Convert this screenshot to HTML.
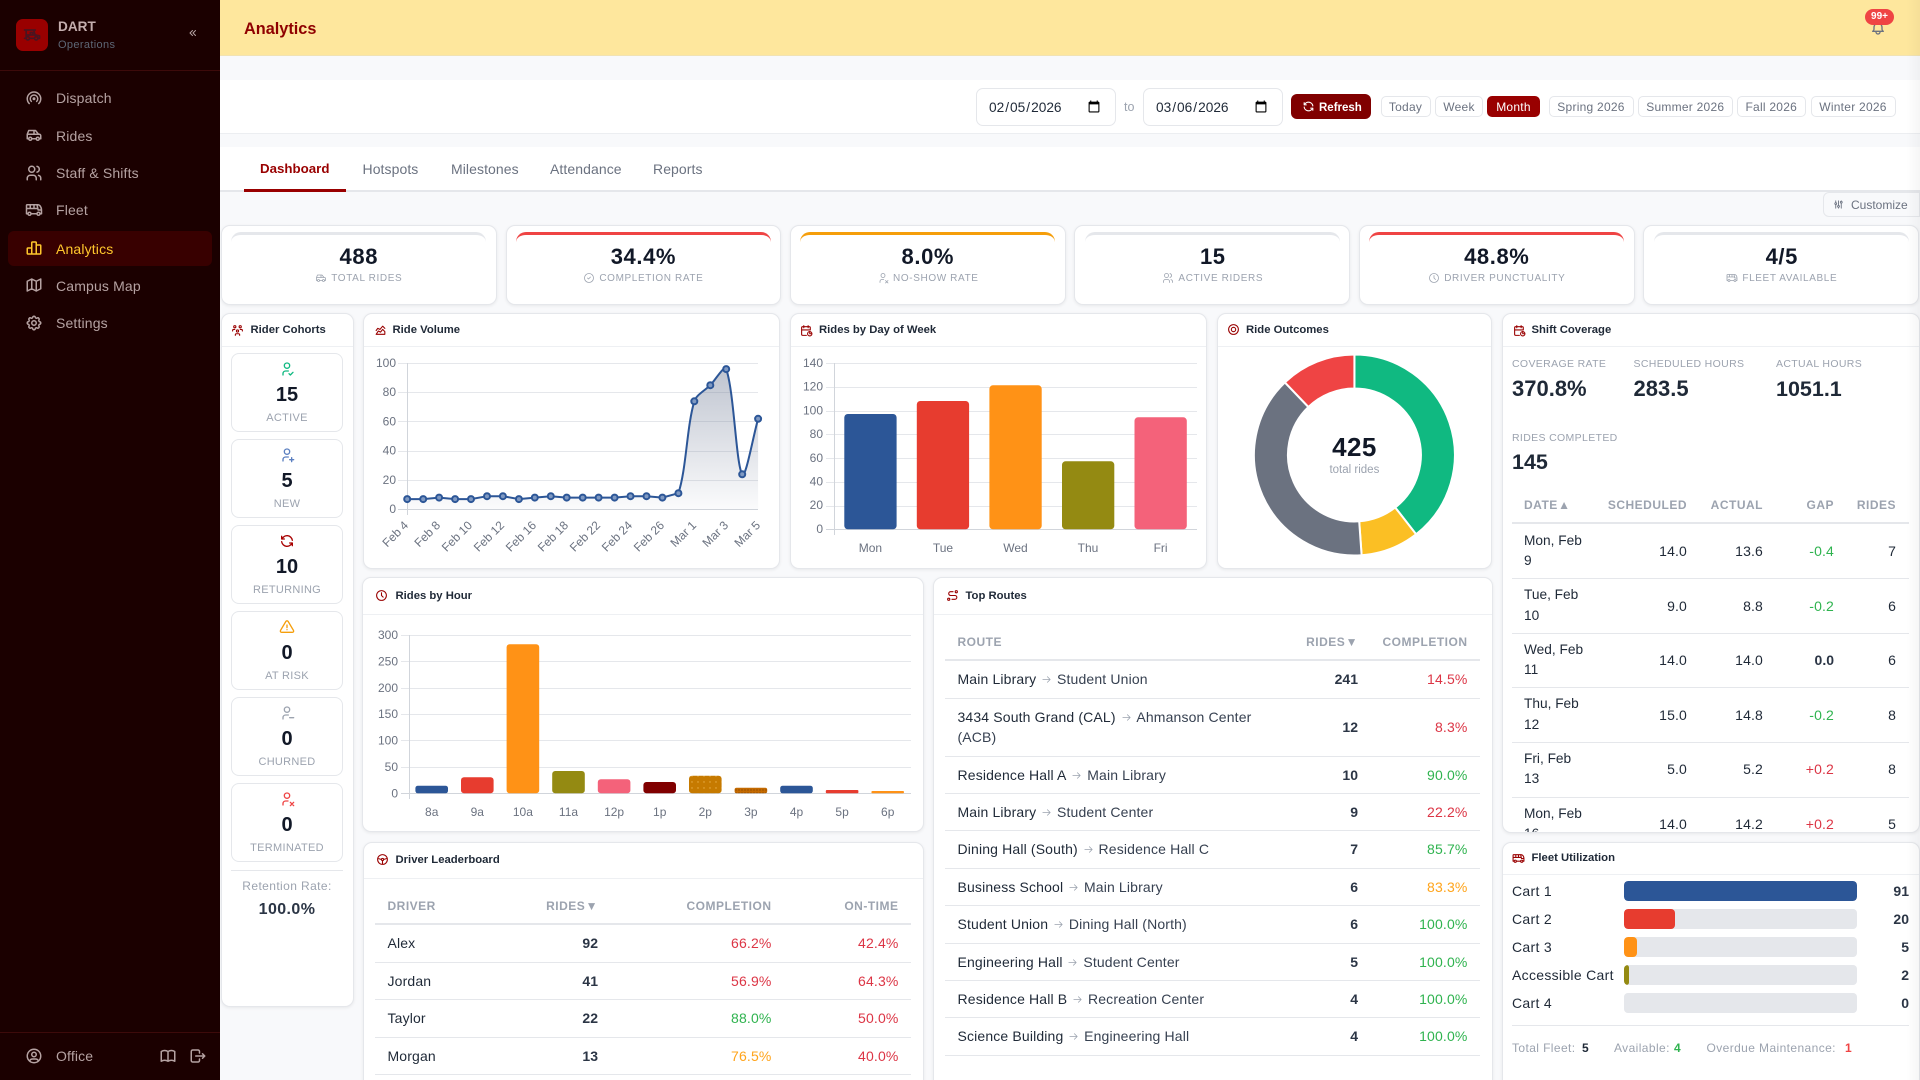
<!DOCTYPE html>
<html lang="en-US">
<head>
<meta charset="utf-8">
<title>DART Operations - Analytics</title>
<style>
*{box-sizing:border-box}
html,body{margin:0;padding:0;width:1920px;height:1080px;overflow:hidden;background:#f8f9fb}
body{position:relative;font-family:"Liberation Sans",sans-serif;color:#1f2937}
.t{position:absolute;white-space:nowrap;line-height:20px;height:20px}
.c{transform:translateX(-50%)}
.b{position:absolute}
svg.i{position:absolute;fill:none;stroke:currentColor;stroke-width:2;stroke-linecap:round;stroke-linejoin:round}
.card{position:absolute;background:#fff;border:1px solid #e5e7eb;border-radius:9px;box-shadow:0 1px 3px rgba(0,0,0,.07)}
.hl{position:absolute;height:1px;background:#eef0f3}
.nav{font-size:14px;letter-spacing:.15px;color:#b5a2a2;left:56px}
.navi{color:#b5a2a2;left:25px;width:18px;height:18px}
.ti{font-size:11.3px;font-weight:700;color:#1f2937;letter-spacing:0}
.hi{color:#990000;width:13px;height:13px}
.tab{font-size:14px;letter-spacing:.08px;color:#6b7280;top:158.5px}
.pre{position:absolute;top:96px;height:21px;border:1px solid #e5e7eb;border-radius:5px;background:#fff;font-size:12px;letter-spacing:.25px;color:#6b7280;line-height:21px;text-align:center;white-space:nowrap}
input{position:absolute;top:88px;height:38px;border:1px solid #e5e7eb;border-radius:7px;background:#fff;font:13.7px "Liberation Sans",sans-serif;color:#1f2937;padding:0 12px 0 11px}
.kv{font-size:22px;font-weight:700;letter-spacing:.6px;color:#111827;text-align:center;top:247px;width:275.6px}
.kl{position:absolute;top:268px;height:20px;width:275.6px;display:flex;justify-content:center;align-items:center;gap:4px;font-size:10px;letter-spacing:.62px;color:#9ca3af;white-space:nowrap}
.kl svg{position:static;width:12px;height:12px;color:#9ca3af;stroke-width:1.6}
.kb{position:absolute;top:232px;height:10px;width:255px;border-top:3px solid #e5e7eb;border-radius:12px 12px 0 0}
.tile{position:absolute;left:231px;width:112px;height:79px;background:#fff;border:1px solid #e5e7eb;border-radius:8px}
.cv{font-size:20px;font-weight:700;color:#111827;left:287px}
.cl{font-size:11px;letter-spacing:.3px;color:#9ca3af;left:287px}
.tile-i{left:279px;width:16px;height:16px;stroke-width:1.8}
.th{font-size:12px;font-weight:700;letter-spacing:.5px;color:#9ca3af}
.th span{margin-left:-3.5px}
.td{font-size:14px;letter-spacing:.15px;color:#1f2937}
.d{font-size:13.7px;letter-spacing:0}
.n{font-weight:700;letter-spacing:0;color:#2b3545}
.to{color:#374151}
.ar{width:11px;height:11px;margin:0 4.85px;vertical-align:-1px;fill:none;stroke:#9ca3af;stroke-width:1.8;stroke-linecap:round;stroke-linejoin:round}
.red{color:#dc3545}.grn{color:#2fb34f}.amb{color:#ffa41b}
.sl{font-size:10.5px;letter-spacing:.35px;color:#9ca3af}
.sv{font-size:21.5px;font-weight:700;color:#1f2937}
.rule{position:absolute;height:1px;background:#e5e7eb}
.rule2{position:absolute;height:2px;background:#e5e7eb}
.fl{font-size:14px;letter-spacing:.3px;color:#1f2937;left:1512px}
.fv{font-size:14px;font-weight:700;color:#2b3545;right:11px}
.tr{position:absolute;left:1624px;width:233px;height:20px;border-radius:4px;background:#e5e7eb;overflow:hidden}
.tr div{height:20px;border-radius:4px}
.ff{font-size:12px;letter-spacing:.4px;color:#9ca3af;top:1037.5px}
.ffb{font-size:12px;font-weight:700;top:1037.5px}
svg text{font-family:"Liberation Sans",sans-serif;font-size:12px;fill:#6b7280}
</style>
</head>
<body>
<svg width="0" height="0" style="position:absolute">
<symbol id="users" viewBox="0 0 24 24"><path d="M9 7m-4 0a4 4 0 1 0 8 0a4 4 0 1 0 -8 0M3 21v-2a4 4 0 0 1 4 -4h4a4 4 0 0 1 4 4v2M16 3.13a4 4 0 0 1 0 7.75M21 21v-2a4 4 0 0 0 -3 -3.85"/></symbol>
<symbol id="bus" viewBox="0 0 24 24"><path d="M6 17m-2 0a2 2 0 1 0 4 0a2 2 0 1 0 -4 0M18 17m-2 0a2 2 0 1 0 4 0a2 2 0 1 0 -4 0M4 17h-2v-11a1 1 0 0 1 1 -1h14a5 7 0 0 1 5 7v5h-2m-4 0h-8M16 5l1.5 7l4.5 0M2 10l15 0M7 5l0 5M12 5l0 5"/></symbol>
<symbol id="car" viewBox="0 0 24 24"><path d="M7 17m-2 0a2 2 0 1 0 4 0a2 2 0 1 0 -4 0M17 17m-2 0a2 2 0 1 0 4 0a2 2 0 1 0 -4 0M5 17h-2v-6l2 -5h9l4 5h1a2 2 0 0 1 2 2v4h-2m-4 0h-6m-6 -6h15m-6 0v-5"/></symbol>
<symbol id="clock" viewBox="0 0 24 24"><path d="M3 12a9 9 0 1 0 18 0a9 9 0 0 0 -18 0M12 7v5l3 3"/></symbol>
<symbol id="cal" viewBox="0 0 24 24"><path d="M11.795 21h-6.795a2 2 0 0 1 -2 -2v-12a2 2 0 0 1 2 -2h12a2 2 0 0 1 2 2v4M18 14v4h4M18 18m-4 0a4 4 0 1 0 8 0a4 4 0 1 0 -8 0M15 3v4M7 3v4M3 11h16"/></symbol>
<symbol id="refresh" viewBox="0 0 24 24"><path d="M20 11a8.1 8.1 0 0 0 -15.5 -2m-.5 -4v4h4M4 13a8.1 8.1 0 0 0 15.5 2m.5 4v-4h-4"/></symbol>
<symbol id="userx" viewBox="0 0 24 24"><path d="M8 7a4 4 0 1 0 8 0a4 4 0 0 0 -8 0M6 21v-2a4 4 0 0 1 4 -4h3.5M22 22l-5 -5M17 22l5 -5"/></symbol>
<symbol id="arrow" viewBox="0 0 24 24"><path d="M4 12h16M14 18l6 -6M14 6l6 6"/></symbol>
</svg>

<!-- SIDEBAR -->
<div class="b" style="left:0;top:0;width:220px;height:1080px;background:#1b0000"></div>
<div class="b" style="left:16px;top:19px;width:32px;height:32px;border-radius:7px;background:#990000"></div>
<svg class="i" style="left:22px;top:25px;width:20px;height:20px;color:#4a1420" viewBox="0 0 24 24"><path d="M3 6h13M5 6v10M14 6l2 7M3 16h2m4 0h6m4 0h2v-3l-5 -1H6M7 16m-2 0a2 2 0 1 0 4 0a2 2 0 1 0 -4 0M17 16m-2 0a2 2 0 1 0 4 0a2 2 0 1 0 -4 0M10 9h3v3h-3z"/></svg>
<div class="t" style="left:58px;top:17px;font-size:13.6px;font-weight:700;color:#c4aeae">DART</div>
<div class="t" style="left:58px;top:35px;font-size:11px;letter-spacing:.35px;color:#5d6675">Operations</div>
<svg class="i" style="left:187px;top:27px;width:12px;height:12px;color:#b5a2a2" viewBox="0 0 24 24"><path d="M11 7l-5 5l5 5M17 7l-5 5l5 5"/></svg>
<div class="b" style="left:0;top:70px;width:220px;height:1px;background:#3d0a0a"></div>
<div class="b" style="left:8px;top:231px;width:204px;height:35px;border-radius:6px;background:#380000"></div>

<svg class="i navi" style="top:89px" viewBox="0 0 24 24"><path d="M18.364 19.364a9 9 0 1 0 -12.728 0M15.536 16.536a5 5 0 1 0 -7.072 0M12 13m-1 0a1 1 0 1 0 2 0a1 1 0 1 0 -2 0"/></svg>
<div class="t nav" style="top:88px">Dispatch</div>
<svg class="i navi" style="top:126px"><use href="#car"/></svg>
<div class="t nav" style="top:125.5px">Rides</div>
<svg class="i navi" style="top:164px"><use href="#users"/></svg>
<div class="t nav" style="top:163px">Staff &amp; Shifts</div>
<svg class="i navi" style="top:201px"><use href="#bus"/></svg>
<div class="t nav" style="top:200px">Fleet</div>
<svg class="i navi" style="top:239px;color:#ffc72c" viewBox="0 0 24 24"><path d="M3 13a1 1 0 0 1 1 -1h4a1 1 0 0 1 1 1v6a1 1 0 0 1 -1 1h-4a1 1 0 0 1 -1 -1zM15 9a1 1 0 0 1 1 -1h4a1 1 0 0 1 1 1v10a1 1 0 0 1 -1 1h-4a1 1 0 0 1 -1 -1zM9 5a1 1 0 0 1 1 -1h4a1 1 0 0 1 1 1v14a1 1 0 0 1 -1 1h-4a1 1 0 0 1 -1 -1zM4 20h14"/></svg>
<div class="t nav" style="top:238.5px;color:#ffc72c">Analytics</div>
<svg class="i navi" style="top:276px" viewBox="0 0 24 24"><path d="M3 7l6 -3l6 3l6 -3v13l-6 3l-6 -3l-6 3v-13M9 4v13M15 7v13"/></svg>
<div class="t nav" style="top:275.5px">Campus Map</div>
<svg class="i navi" style="top:314px" viewBox="0 0 24 24"><path d="M10.325 4.317c.426 -1.756 2.924 -1.756 3.35 0a1.724 1.724 0 0 0 2.573 1.066c1.543 -.94 3.31 .826 2.37 2.37a1.724 1.724 0 0 0 1.065 2.572c1.756 .426 1.756 2.924 0 3.35a1.724 1.724 0 0 0 -1.066 2.573c.94 1.543 -.826 3.31 -2.37 2.37a1.724 1.724 0 0 0 -2.572 1.065c-.426 1.756 -2.924 1.756 -3.35 0a1.724 1.724 0 0 0 -2.573 -1.066c-1.543 .94 -3.31 -.826 -2.37 -2.37a1.724 1.724 0 0 0 -1.065 -2.572c-1.756 -.426 -1.756 -2.924 0 -3.35a1.724 1.724 0 0 0 1.066 -2.573c-.94 -1.543 .826 -3.31 2.37 -2.37c1 .608 2.296 .07 2.572 -1.065zM9 12a3 3 0 1 0 6 0a3 3 0 0 0 -6 0"/></svg>
<div class="t nav" style="top:313px">Settings</div>

<div class="b" style="left:0;top:1032px;width:220px;height:1px;background:#3d0a0a"></div>
<svg class="i navi" style="top:1047px" viewBox="0 0 24 24"><path d="M12 12m-9 0a9 9 0 1 0 18 0a9 9 0 1 0 -18 0M12 10m-3 0a3 3 0 1 0 6 0a3 3 0 1 0 -6 0M6.168 18.849a4 4 0 0 1 3.832 -2.849h4a4 4 0 0 1 3.834 2.855"/></svg>
<div class="t nav" style="top:1046px">Office</div>
<svg class="i navi" style="left:159px;top:1047px" viewBox="0 0 24 24"><path d="M3 19a9 9 0 0 1 9 0a9 9 0 0 1 9 0M3 6a9 9 0 0 1 9 0a9 9 0 0 1 9 0M3 6l0 13M12 6l0 13M21 6l0 13"/></svg>
<svg class="i navi" style="left:189px;top:1047px" viewBox="0 0 24 24"><path d="M14 8v-2a2 2 0 0 0 -2 -2h-7a2 2 0 0 0 -2 2v12a2 2 0 0 0 2 2h7a2 2 0 0 0 2 -2v-2M9 12h12l-3 -3M18 15l3 -3"/></svg>

<!-- HEADER -->
<div class="b" style="left:220px;top:0;width:1700px;height:56px;background:#fee79d;border-bottom:1px solid #f1e3b4"></div>
<div class="t" style="left:244px;top:19px;font-size:16.3px;font-weight:700;color:#8f0000">Analytics</div>
<svg class="i" style="left:1870px;top:20px;width:16px;height:16px;color:#6b7280" viewBox="0 0 24 24"><path d="M10 5a2 2 0 1 1 4 0a7 7 0 0 1 4 6v3a4 4 0 0 0 2 3h-16a4 4 0 0 0 2 -3v-3a7 7 0 0 1 4 -6M9 17v1a3 3 0 0 0 6 0v-1"/></svg>
<div class="b" style="left:1865px;top:9px;width:29px;height:16px;border-radius:8px;background:#ef4444;color:#fff;font-size:10px;font-weight:700;line-height:16px;text-align:center">99+</div>

<!-- TOOLBAR -->
<div class="b" style="left:220px;top:80px;width:1700px;height:54px;background:#fff;border-bottom:1px solid #eceef1"></div>
<input type="date" value="2026-02-05" style="left:976px;width:140px">
<div class="t" style="left:1124px;top:97px;font-size:12.5px;color:#9ca3af">to</div>
<input type="date" value="2026-03-06" style="left:1143px;width:140px">
<div class="b" style="left:1291px;top:94px;width:80px;height:25px;border-radius:6px;background:#800000"></div>
<svg class="i" style="left:1302px;top:100px;width:13px;height:13px;color:#fff"><use href="#refresh"/></svg>
<div class="t" style="left:1319px;top:98px;font-size:11.5px;font-weight:700;color:#fff">Refresh</div>
<div class="pre" style="left:1380.5px;width:50px">Today</div>
<div class="pre" style="left:1435px;width:48px">Week</div>
<div class="pre" style="left:1487px;width:53px;background:#990000;border-color:#990000;color:#fff">Month</div>
<div class="pre" style="left:1548.5px;width:85px">Spring 2026</div>
<div class="pre" style="left:1638px;width:94.5px">Summer 2026</div>
<div class="pre" style="left:1737px;width:68.5px">Fall 2026</div>
<div class="pre" style="left:1810.5px;width:85px">Winter 2026</div>

<!-- TABS -->
<div class="b" style="left:220px;top:147px;width:1700px;height:45px;background:#fff;border-bottom:2px solid #e5e7eb"></div>
<div class="t" style="left:260px;top:158.5px;font-size:13.3px;font-weight:700;color:#990000">Dashboard</div>
<div class="b" style="left:244px;top:189px;width:102px;height:3px;background:#990000"></div>
<div class="t tab" style="left:362.5px">Hotspots</div>
<div class="t tab" style="left:451px">Milestones</div>
<div class="t tab" style="left:550px">Attendance</div>
<div class="t tab" style="left:653px">Reports</div>

<div class="b" style="left:1823px;top:192px;width:97px;height:25px;background:#f8f9fb;border:1px solid #e5e7eb;border-radius:6px 0 0 6px"></div>
<svg class="i" style="left:1833px;top:199px;width:11px;height:11px;color:#6b7280" viewBox="0 0 24 24"><path d="M4 10a2 2 0 1 0 4 0a2 2 0 0 0 -4 0M6 4v4M6 12v8M10 16a2 2 0 1 0 4 0a2 2 0 0 0 -4 0M12 4v10M12 18v2M16 7a2 2 0 1 0 4 0a2 2 0 0 0 -4 0M18 4v1M18 9v11"/></svg>
<div class="t" style="left:1851px;top:195px;font-size:12px;color:#6b7280">Customize</div>

<!-- KPI CARDS -->
<div class="card" style="left:221px;top:225px;width:275.6px;height:79.5px"></div>
<div class="card" style="left:505.6px;top:225px;width:275.6px;height:79.5px"></div>
<div class="card" style="left:789.5px;top:225px;width:276px;height:79.5px"></div>
<div class="card" style="left:1074.4px;top:225px;width:276px;height:79.5px"></div>
<div class="card" style="left:1358.8px;top:225px;width:276px;height:79.5px"></div>
<div class="card" style="left:1643.2px;top:225px;width:275.6px;height:79.5px"></div>
<div class="kb" style="left:231px"></div>
<div class="kb" style="left:516px;border-color:#ef4444"></div>
<div class="kb" style="left:800px;border-color:#f59e0b"></div>
<div class="kb" style="left:1085px"></div>
<div class="kb" style="left:1369px;border-color:#ef4444"></div>
<div class="kb" style="left:1654px"></div>
<div class="t kv" style="left:221px">488</div>
<div class="t kv" style="left:505.6px">34.4%</div>
<div class="t kv" style="left:790px">8.0%</div>
<div class="t kv" style="left:1075px">15</div>
<div class="t kv" style="left:1359px">48.8%</div>
<div class="t kv" style="left:1644px">4/5</div>
<div class="kl" style="left:221px"><svg class="i"><use href="#car"/></svg>TOTAL RIDES</div>
<div class="kl" style="left:505.6px"><svg class="i" viewBox="0 0 24 24"><path d="M12 12m-9 0a9 9 0 1 0 18 0a9 9 0 1 0 -18 0M9 12l2 2l4 -4"/></svg>COMPLETION RATE</div>
<div class="kl" style="left:790px"><svg class="i"><use href="#userx"/></svg>NO-SHOW RATE</div>
<div class="kl" style="left:1075px"><svg class="i"><use href="#users"/></svg>ACTIVE RIDERS</div>
<div class="kl" style="left:1359px"><svg class="i"><use href="#clock"/></svg>DRIVER PUNCTUALITY</div>
<div class="kl" style="left:1644px"><svg class="i"><use href="#bus"/></svg>FLEET AVAILABLE</div>

<!-- RIDER COHORTS -->
<div class="card" style="left:221px;top:313px;width:132.5px;height:694px"></div>
<div class="hl" style="left:222px;top:346px;width:130.5px"></div>
<svg class="i hi" style="left:231px;top:323.5px" viewBox="0 0 24 24"><path d="M10 13a2 2 0 1 0 4 0a2 2 0 0 0 -4 0M8 21v-1a2 2 0 0 1 2 -2h4a2 2 0 0 1 2 2v1M15 5a2 2 0 1 0 4 0a2 2 0 0 0 -4 0M17 10h2a2 2 0 0 1 2 2v1M5 5a2 2 0 1 0 4 0a2 2 0 0 0 -4 0M3 13v-1a2 2 0 0 1 2 -2h2"/></svg>
<div class="t ti" style="left:250.5px;top:320px">Rider Cohorts</div>

<div class="tile" style="top:353px"></div><div class="tile" style="top:439px"></div><div class="tile" style="top:525px"></div><div class="tile" style="top:611px"></div><div class="tile" style="top:697px"></div><div class="tile" style="top:783px"></div>

<svg class="i tile-i" style="top:361px;color:#10b981" viewBox="0 0 24 24"><path d="M8 7a4 4 0 1 0 8 0a4 4 0 0 0 -8 0M6 21v-2a4 4 0 0 1 4 -4h4M15 19l2 2l4 -4"/></svg>
<div class="t cv c" style="top:385px">15</div><div class="t cl c" style="top:407.5px">ACTIVE</div>
<svg class="i tile-i" style="top:447px;color:#5b7fc0" viewBox="0 0 24 24"><path d="M8 7a4 4 0 1 0 8 0a4 4 0 0 0 -8 0M16 19h6M19 16v6M6 21v-2a4 4 0 0 1 4 -4h4"/></svg>
<div class="t cv c" style="top:471px">5</div><div class="t cl c" style="top:493.5px">NEW</div>
<svg class="i tile-i" style="top:533px;color:#a80000"><use href="#refresh"/></svg>
<div class="t cv c" style="top:557px">10</div><div class="t cl c" style="top:579.5px">RETURNING</div>
<svg class="i tile-i" style="top:619px;color:#f59e0b" viewBox="0 0 24 24"><path d="M12 9v4M10.363 3.591l-8.106 13.534a1.914 1.914 0 0 0 1.636 2.871h16.214a1.914 1.914 0 0 0 1.636 -2.87l-8.106 -13.536a1.914 1.914 0 0 0 -3.274 0zM12 16h.01"/></svg>
<div class="t cv c" style="top:643px">0</div><div class="t cl c" style="top:665.5px">AT RISK</div>
<svg class="i tile-i" style="top:705px;color:#9ca3af" viewBox="0 0 24 24"><path d="M8 7a4 4 0 1 0 8 0a4 4 0 0 0 -8 0M6 21v-2a4 4 0 0 1 4 -4h4M16 19h6"/></svg>
<div class="t cv c" style="top:729px">0</div><div class="t cl c" style="top:751.5px">CHURNED</div>
<svg class="i tile-i" style="top:791px;color:#ef4444"><use href="#userx"/></svg>
<div class="t cv c" style="top:815px">0</div><div class="t cl c" style="top:837.5px">TERMINATED</div>
<div class="rule" style="left:231px;top:870px;width:112px"></div>
<div class="t c" style="left:287px;top:876px;font-size:12px;letter-spacing:.4px;color:#9ca3af">Retention Rate:</div>
<div class="t c" style="left:287px;top:899.5px;font-size:16px;font-weight:700;letter-spacing:.4px;color:#2b3545">100.0%</div>

<!-- RIDE VOLUME -->
<div class="card" style="left:363px;top:313px;width:417px;height:255.5px"></div>
<div class="hl" style="left:364px;top:346px;width:415px"></div>
<svg class="i hi" style="left:374px;top:323.5px" viewBox="0 0 24 24"><path d="M4 19l4 -6l4 2l4 -5l4 4l0 5l-16 0M4 12l3 -4l4 2l5 -6l4 4"/></svg>
<div class="t ti" style="left:392.5px;top:320px">Ride Volume</div>
<svg class="b" style="left:0;top:0" width="1920" height="1080">
<defs><linearGradient id="ag" gradientUnits="userSpaceOnUse" x1="0" y1="365" x2="0" y2="509"><stop offset="0" stop-color="#6e7a94" stop-opacity=".45"/><stop offset="1" stop-color="#6e7a94" stop-opacity=".03"/></linearGradient>
<pattern id="d1" width="6" height="6" patternUnits="userSpaceOnUse"><rect width="6" height="6" fill="#c67a00"/><circle cx="2" cy="2" r=".7" fill="#eab04a"/></pattern>
<pattern id="d2" width="3" height="3" patternUnits="userSpaceOnUse"><rect width="3" height="3" fill="#c46a00"/><circle cx="1" cy="1" r=".6" fill="#7a3d00"/></pattern></defs>
<!-- line chart grid -->
<g stroke="#e5e7eb" stroke-width="1">
<path d="M398 363.5H758M398 392.5H758M398 421.5H758M398 451.5H758M398 480.5H758"/>
</g>
<path d="M398 509.5H758M407.5 363V515" stroke="#d1d5db" fill="none"/>
<g text-anchor="end">
<text x="396" y="367">100</text><text x="396" y="396.2">80</text><text x="396" y="425.4">60</text><text x="396" y="454.6">40</text><text x="396" y="483.8">20</text><text x="396" y="513">0</text>
</g>
<path d="M407.2 499.1L423.2 499.1L439.1 497.6L455.1 499.1L471 499.1L487 496.2L502.9 496.2L518.9 499.1L534.8 497.6L550.8 496.2L566.7 497.6L582.7 497.6L598.6 497.6L614.6 497.6L630.5 496.2L646.5 496.2L662.4 497.6L678.4 493.2C686.5 468.6 686.6 427.3 694.3 401.3C696.2 394.9 705.5 390 710.3 385.2C715.1 380.4 724.5 364.4 726.2 369.1C734.1 391.1 736 464.7 742.2 474.3C745.6 479.6 753.3 435.5 758.1 418.8L758.1 509.3L407.2 509.3Z" fill="url(#ag)"/>
<path d="M407.2 499.1L423.2 499.1L439.1 497.6L455.1 499.1L471 499.1L487 496.2L502.9 496.2L518.9 499.1L534.8 497.6L550.8 496.2L566.7 497.6L582.7 497.6L598.6 497.6L614.6 497.6L630.5 496.2L646.5 496.2L662.4 497.6L678.4 493.2C686.5 468.6 686.6 427.3 694.3 401.3C696.2 394.9 705.5 390 710.3 385.2C715.1 380.4 724.5 364.4 726.2 369.1C734.1 391.1 736 464.7 742.2 474.3C745.6 479.6 753.3 435.5 758.1 418.8" fill="none" stroke="#2c5697" stroke-width="2"/>
<g fill="#7f99c2" stroke="#2c5697" stroke-width="2">
<circle cx="407.2" cy="499.1" r="3"/><circle cx="423.2" cy="499.1" r="3"/><circle cx="439.1" cy="497.6" r="3"/><circle cx="455.1" cy="499.1" r="3"/><circle cx="471" cy="499.1" r="3"/><circle cx="487" cy="496.2" r="3"/><circle cx="502.9" cy="496.2" r="3"/><circle cx="518.9" cy="499.1" r="3"/><circle cx="534.8" cy="497.6" r="3"/><circle cx="550.8" cy="496.2" r="3"/><circle cx="566.7" cy="497.6" r="3"/><circle cx="582.7" cy="497.6" r="3"/><circle cx="598.6" cy="497.6" r="3"/><circle cx="614.6" cy="497.6" r="3"/><circle cx="630.5" cy="496.2" r="3"/><circle cx="646.5" cy="496.2" r="3"/><circle cx="662.4" cy="497.6" r="3"/><circle cx="678.4" cy="493.2" r="3"/><circle cx="694.3" cy="401.3" r="3"/><circle cx="710.3" cy="385.2" r="3"/><circle cx="726.2" cy="369.1" r="3"/><circle cx="742.2" cy="474.3" r="3"/><circle cx="758.1" cy="418.8" r="3"/>
</g>
<g text-anchor="end">
<text transform="translate(409 526) rotate(-45)">Feb 4</text>
<text transform="translate(441 526) rotate(-45)">Feb 8</text>
<text transform="translate(473 526) rotate(-45)">Feb 10</text>
<text transform="translate(505 526) rotate(-45)">Feb 12</text>
<text transform="translate(537 526) rotate(-45)">Feb 16</text>
<text transform="translate(569 526) rotate(-45)">Feb 18</text>
<text transform="translate(601 526) rotate(-45)">Feb 22</text>
<text transform="translate(633 526) rotate(-45)">Feb 24</text>
<text transform="translate(665 526) rotate(-45)">Feb 26</text>
<text transform="translate(697 526) rotate(-45)">Mar 1</text>
<text transform="translate(729 526) rotate(-45)">Mar 3</text>
<text transform="translate(761 526) rotate(-45)">Mar 5</text>
</g>
</svg>

<!-- RIDES BY DAY OF WEEK -->
<div class="card" style="left:789.5px;top:313px;width:417.5px;height:255.5px"></div>
<div class="hl" style="left:790.5px;top:346px;width:415.5px"></div>
<svg class="i hi" style="left:800px;top:323.5px"><use href="#cal"/></svg>
<div class="t ti" style="left:819px;top:320px">Rides by Day of Week</div>

<!-- RIDE OUTCOMES -->
<div class="card" style="left:1216.5px;top:313px;width:275.5px;height:255.5px"></div>
<div class="hl" style="left:1217.5px;top:346px;width:273.5px"></div>
<svg class="i hi" style="left:1227px;top:322.5px" viewBox="0 0 24 24"><path d="M3 12a9 9 0 1 0 18 0a9 9 0 0 0 -18 0M8 12a4 4 0 1 0 8 0a4 4 0 0 0 -8 0"/></svg>
<div class="t ti" style="left:1246px;top:320px">Ride Outcomes</div>

<!-- RIDES BY HOUR -->
<div class="card" style="left:362px;top:577px;width:561.5px;height:255px"></div>
<div class="hl" style="left:363px;top:614px;width:559.5px"></div>
<svg class="i hi" style="left:375px;top:588.5px"><use href="#clock"/></svg>
<div class="t ti" style="left:395.5px;top:586px">Rides by Hour</div>

<!-- TOP ROUTES -->
<div class="card" style="left:932.5px;top:577px;width:560px;height:520px"></div>
<div class="hl" style="left:933.5px;top:614px;width:558px"></div>
<svg class="i hi" style="left:945.5px;top:589px" viewBox="0 0 24 24"><path d="M3 19a2 2 0 1 0 4 0a2 2 0 0 0 -4 0M19 7a2 2 0 1 0 0 -4a2 2 0 0 0 0 4zM11 19h5.5a3.5 3.5 0 0 0 0 -7h-8a3.5 3.5 0 0 1 0 -7h4.5"/></svg>
<div class="t ti" style="left:965.5px;top:586px">Top Routes</div>

<!-- DRIVER LEADERBOARD -->
<div class="card" style="left:362.5px;top:842px;width:561px;height:250px"></div>
<div class="hl" style="left:363.5px;top:878px;width:559px"></div>
<svg class="i hi" style="left:375.5px;top:852.5px" viewBox="0 0 24 24"><path d="M12 12m-9 0a9 9 0 1 0 18 0a9 9 0 1 0 -18 0M12 12m-2 0a2 2 0 1 0 4 0a2 2 0 1 0 -4 0M12 14l0 7M10 12l-6.75 -2M14 12l6.75 -2"/></svg>
<div class="t ti" style="left:395.5px;top:850px">Driver Leaderboard</div>

<!-- SHIFT COVERAGE -->
<div class="card" style="left:1501.5px;top:313px;width:418px;height:520px"></div>
<div class="hl" style="left:1502.5px;top:346px;width:416px"></div>
<svg class="i hi" style="left:1512.5px;top:323.5px"><use href="#cal"/></svg>
<div class="t ti" style="left:1531.5px;top:320px">Shift Coverage</div>

<!-- FLEET UTILIZATION -->
<div class="card" style="left:1501.5px;top:842px;width:418px;height:250px"></div>
<div class="hl" style="left:1502.5px;top:874px;width:416px"></div>
<svg class="i hi" style="left:1512px;top:851.5px"><use href="#bus"/></svg>
<div class="t ti" style="left:1531.5px;top:848px">Fleet Utilization</div>

<!-- CHARTS OVER CARDS -->
<svg class="b" style="left:0;top:0" width="1920" height="1080">
<!-- day of week -->
<path d="M826 363.5H1197M826 387.5H1197M826 411.5H1197M826 434.5H1197M826 458.5H1197M826 482.5H1197M826 506.5H1197" stroke="#e5e7eb" fill="none"/>
<path d="M826 529.5H1197M834.5 363V535" stroke="#d1d5db" fill="none"/>
<g text-anchor="end">
<text x="823" y="367">140</text><text x="823" y="390.7">120</text><text x="823" y="414.5">100</text><text x="823" y="438.1">80</text><text x="823" y="461.8">60</text><text x="823" y="485.5">40</text><text x="823" y="509.2">20</text><text x="823" y="533">0</text>
</g>
<rect x="844.3" y="414" width="52.3" height="115.3" rx="3.5" fill="#2c5697"/>
<rect x="916.8" y="401" width="52.3" height="128.3" rx="3.5" fill="#e73c2f"/>
<rect x="989.4" y="385.3" width="52.3" height="144" rx="3.5" fill="#ff9216"/>
<rect x="1062" y="461.3" width="52.3" height="68" rx="3.5" fill="#948a12"/>
<rect x="1134.5" y="417.3" width="52.3" height="112" rx="3.5" fill="#f4627a"/>
<g text-anchor="middle">
<text x="870.4" y="552">Mon</text><text x="943" y="552">Tue</text><text x="1015.5" y="552">Wed</text><text x="1088" y="552">Thu</text><text x="1160.6" y="552">Fri</text>
</g>
<!-- donut -->
<g stroke="#fff" stroke-width="2">
<path d="M1354.4 354.5A100.5 100.5 0 0 1 1416.1 534.3L1395.2 507.5A66.5 66.5 0 0 0 1354.4 388.5Z" fill="#10b981"/>
<path d="M1416.1 534.3A100.5 100.5 0 0 1 1361.6 555.2L1359.2 521.3A66.5 66.5 0 0 0 1395.2 507.5Z" fill="#fbbf24"/>
<path d="M1361.6 555.2A100.5 100.5 0 0 1 1284.9 382.4L1308.4 407A66.5 66.5 0 0 0 1359.2 521.3Z" fill="#6b7280"/>
<path d="M1284.9 382.4A100.5 100.5 0 0 1 1354.4 354.5L1354.4 388.5A66.5 66.5 0 0 0 1308.4 407Z" fill="#ef4444"/>
</g>
<text x="1354.4" y="456" text-anchor="middle" style="font-size:26px;font-weight:700;fill:#111827;letter-spacing:.4px">425</text>
<text x="1354.4" y="473" text-anchor="middle" style="font-size:11.5px;fill:#9ca3af">total rides</text>
<!-- by hour -->
<path d="M401 635.5H911M401 661.5H911M401 688.5H911M401 714.5H911M401 740.5H911M401 767.5H911" stroke="#e5e7eb" fill="none"/>
<path d="M401 793.5H911M409.5 635V799" stroke="#d1d5db" fill="none"/>
<g text-anchor="end">
<text x="398" y="639">300</text><text x="398" y="665.4">250</text><text x="398" y="691.8">200</text><text x="398" y="718.2">150</text><text x="398" y="744.6">100</text><text x="398" y="771">50</text><text x="398" y="797.4">0</text>
</g>
<rect x="415.4" y="785.7" width="32.6" height="7.6" rx="2.5" fill="#2c5697"/>
<rect x="461" y="777.3" width="32.6" height="16" rx="3" fill="#e73c2f"/>
<rect x="506.6" y="644.3" width="32.6" height="149" rx="3" fill="#ff9216"/>
<rect x="552.2" y="771" width="32.6" height="22.3" rx="3" fill="#948a12"/>
<rect x="597.8" y="779.3" width="32.6" height="14" rx="3" fill="#f4627a"/>
<rect x="643.4" y="782" width="32.6" height="11.3" rx="3" fill="#800000"/>
<rect x="689" y="775.7" width="32.6" height="17.6" rx="3" fill="url(#d1)"/>
<rect x="734.6" y="787.7" width="32.6" height="5.6" rx="2" fill="url(#d2)"/>
<rect x="780.2" y="785.7" width="32.6" height="7.6" rx="2.5" fill="#2c5697"/>
<rect x="825.8" y="790" width="32.6" height="3.3" rx="1" fill="#e73c2f"/>
<rect x="871.4" y="791" width="32.6" height="2.3" rx="1" fill="#ff9216"/>
<g text-anchor="middle">
<text x="431.7" y="816">8a</text><text x="477.3" y="816">9a</text><text x="522.9" y="816">10a</text><text x="568.5" y="816">11a</text><text x="614.1" y="816">12p</text><text x="659.7" y="816">1p</text><text x="705.3" y="816">2p</text><text x="750.9" y="816">3p</text><text x="796.5" y="816">4p</text><text x="842.1" y="816">5p</text><text x="887.7" y="816">6p</text>
</g>
</svg>

<!-- TOP ROUTES TABLE -->
<div class="t th" style="left:957.5px;top:632px">ROUTE</div>
<div class="t th" style="right:562px;top:632px">RIDES <span>▼</span></div>
<div class="t th" style="right:452.5px;top:632px">COMPLETION</div>
<div class="rule2" style="left:945px;top:659px;width:535px"></div>
<div class="rule" style="left:945px;top:698px;width:535px"></div>
<div class="rule" style="left:945px;top:756px;width:535px"></div>
<div class="rule" style="left:945px;top:793px;width:535px"></div>
<div class="rule" style="left:945px;top:830px;width:535px"></div>
<div class="rule" style="left:945px;top:868px;width:535px"></div>
<div class="rule" style="left:945px;top:905px;width:535px"></div>
<div class="rule" style="left:945px;top:943px;width:535px"></div>
<div class="rule" style="left:945px;top:980px;width:535px"></div>
<div class="rule" style="left:945px;top:1017px;width:535px"></div>
<div class="rule" style="left:945px;top:1055px;width:535px"></div>

<div class="t td" style="left:957.5px;top:669px">Main Library<svg class="ar"><use href="#arrow"/></svg><span class="to">Student Union</span></div>
<div class="t td n" style="right:562px;top:669px">241</div><div class="t td red" style="right:452.5px;top:669px">14.5%</div>
<div class="t td" style="left:957.5px;top:707px">3434 South Grand (CAL)<svg class="ar"><use href="#arrow"/></svg><span class="to">Ahmanson Center</span></div>
<div class="t td to" style="left:957.5px;top:727px">(ACB)</div>
<div class="t td n" style="right:562px;top:717px">12</div><div class="t td red" style="right:452.5px;top:717px">8.3%</div>
<div class="t td" style="left:957.5px;top:765px">Residence Hall A<svg class="ar"><use href="#arrow"/></svg><span class="to">Main Library</span></div>
<div class="t td n" style="right:562px;top:765px">10</div><div class="t td grn" style="right:452.5px;top:765px">90.0%</div>
<div class="t td" style="left:957.5px;top:802px">Main Library<svg class="ar"><use href="#arrow"/></svg><span class="to">Student Center</span></div>
<div class="t td n" style="right:562px;top:802px">9</div><div class="t td red" style="right:452.5px;top:802px">22.2%</div>
<div class="t td" style="left:957.5px;top:839px">Dining Hall (South)<svg class="ar"><use href="#arrow"/></svg><span class="to">Residence Hall C</span></div>
<div class="t td n" style="right:562px;top:839px">7</div><div class="t td grn" style="right:452.5px;top:839px">85.7%</div>
<div class="t td" style="left:957.5px;top:877px">Business School<svg class="ar"><use href="#arrow"/></svg><span class="to">Main Library</span></div>
<div class="t td n" style="right:562px;top:877px">6</div><div class="t td amb" style="right:452.5px;top:877px">83.3%</div>
<div class="t td" style="left:957.5px;top:914px">Student Union<svg class="ar"><use href="#arrow"/></svg><span class="to">Dining Hall (North)</span></div>
<div class="t td n" style="right:562px;top:914px">6</div><div class="t td grn" style="right:452.5px;top:914px">100.0%</div>
<div class="t td" style="left:957.5px;top:952px">Engineering Hall<svg class="ar"><use href="#arrow"/></svg><span class="to">Student Center</span></div>
<div class="t td n" style="right:562px;top:952px">5</div><div class="t td grn" style="right:452.5px;top:952px">100.0%</div>
<div class="t td" style="left:957.5px;top:989px">Residence Hall B<svg class="ar"><use href="#arrow"/></svg><span class="to">Recreation Center</span></div>
<div class="t td n" style="right:562px;top:989px">4</div><div class="t td grn" style="right:452.5px;top:989px">100.0%</div>
<div class="t td" style="left:957.5px;top:1026px">Science Building<svg class="ar"><use href="#arrow"/></svg><span class="to">Engineering Hall</span></div>
<div class="t td n" style="right:562px;top:1026px">4</div><div class="t td grn" style="right:452.5px;top:1026px">100.0%</div>

<!-- DRIVER TABLE -->
<div class="t th" style="left:387.5px;top:896px">DRIVER</div>
<div class="t th" style="right:1322px;top:896px">RIDES <span>▼</span></div>
<div class="t th" style="right:1148.5px;top:896px">COMPLETION</div>
<div class="t th" style="right:1021.5px;top:896px">ON-TIME</div>
<div class="rule2" style="left:375px;top:923px;width:536px"></div>
<div class="rule" style="left:375px;top:962px;width:536px"></div>
<div class="rule" style="left:375px;top:999px;width:536px"></div>
<div class="rule" style="left:375px;top:1037px;width:536px"></div>
<div class="rule" style="left:375px;top:1074px;width:536px"></div>
<div class="t td" style="left:387.5px;top:933px">Alex</div><div class="t td n" style="right:1322px;top:933px">92</div><div class="t td red" style="right:1148.5px;top:933px">66.2%</div><div class="t td red" style="right:1021.5px;top:933px">42.4%</div>
<div class="t td" style="left:387.5px;top:971px">Jordan</div><div class="t td n" style="right:1322px;top:971px">41</div><div class="t td red" style="right:1148.5px;top:971px">56.9%</div><div class="t td red" style="right:1021.5px;top:971px">64.3%</div>
<div class="t td" style="left:387.5px;top:1008px">Taylor</div><div class="t td n" style="right:1322px;top:1008px">22</div><div class="t td grn" style="right:1148.5px;top:1008px">88.0%</div><div class="t td red" style="right:1021.5px;top:1008px">50.0%</div>
<div class="t td" style="left:387.5px;top:1046px">Morgan</div><div class="t td n" style="right:1322px;top:1046px">13</div><div class="t td amb" style="right:1148.5px;top:1046px">76.5%</div><div class="t td red" style="right:1021.5px;top:1046px">40.0%</div>

<!-- SHIFT COVERAGE CONTENT -->
<div class="t sl" style="left:1512px;top:353.5px">COVERAGE RATE</div>
<div class="t sl" style="left:1633.5px;top:353.5px">SCHEDULED HOURS</div>
<div class="t sl" style="left:1776px;top:353.5px">ACTUAL HOURS</div>
<div class="t sv" style="left:1512px;top:379px;font-size:22px">370.8%</div>
<div class="t sv" style="left:1633.5px;top:379px;font-size:22px">283.5</div>
<div class="t sv" style="left:1776px;top:379px">1051.1</div>
<div class="t sl" style="left:1512px;top:427.5px">RIDES COMPLETED</div>
<div class="t sv" style="left:1512px;top:452px">145</div>

<div class="t th" style="left:1524px;top:495px">DATE <span>▲</span></div>
<div class="t th" style="right:233px;top:495px">SCHEDULED</div>
<div class="t th" style="right:157px;top:495px">ACTUAL</div>
<div class="t th" style="right:86px;top:495px">GAP</div>
<div class="t th" style="right:24px;top:495px">RIDES</div>
<div class="rule2" style="left:1512px;top:522px;width:397px"></div>
<div class="rule" style="left:1512px;top:578px;width:397px"></div>
<div class="rule" style="left:1512px;top:633px;width:397px"></div>
<div class="rule" style="left:1512px;top:687px;width:397px"></div>
<div class="rule" style="left:1512px;top:742px;width:397px"></div>
<div class="rule" style="left:1512px;top:797px;width:397px"></div>

<div class="t td d" style="left:1524px;top:531px">Mon, Feb</div><div class="t td d" style="left:1524px;top:551px">9</div>
<div class="t td" style="right:233px;top:541px">14.0</div><div class="t td" style="right:157px;top:541px">13.6</div><div class="t td grn" style="right:86px;top:541px">-0.4</div><div class="t td" style="right:24px;top:541px">7</div>
<div class="t td d" style="left:1524px;top:585px">Tue, Feb</div><div class="t td d" style="left:1524px;top:606px">10</div>
<div class="t td" style="right:233px;top:596px">9.0</div><div class="t td" style="right:157px;top:596px">8.8</div><div class="t td grn" style="right:86px;top:596px">-0.2</div><div class="t td" style="right:24px;top:596px">6</div>
<div class="t td d" style="left:1524px;top:640px">Wed, Feb</div><div class="t td d" style="left:1524px;top:660px">11</div>
<div class="t td" style="right:233px;top:650px">14.0</div><div class="t td" style="right:157px;top:650px">14.0</div><div class="t td n" style="right:86px;top:650px">0.0</div><div class="t td" style="right:24px;top:650px">6</div>
<div class="t td d" style="left:1524px;top:694px">Thu, Feb</div><div class="t td d" style="left:1524px;top:715px">12</div>
<div class="t td" style="right:233px;top:705px">15.0</div><div class="t td" style="right:157px;top:705px">14.8</div><div class="t td grn" style="right:86px;top:705px">-0.2</div><div class="t td" style="right:24px;top:705px">8</div>
<div class="t td d" style="left:1524px;top:749px">Fri, Feb</div><div class="t td d" style="left:1524px;top:769px">13</div>
<div class="t td" style="right:233px;top:759px">5.0</div><div class="t td" style="right:157px;top:759px">5.2</div><div class="t td red" style="right:86px;top:759px">+0.2</div><div class="t td" style="right:24px;top:759px">8</div>
<div class="t td d" style="left:1524px;top:804px">Mon, Feb</div>
<div class="b" style="left:1503px;top:800px;width:415px;height:32px;overflow:hidden"><div class="t td d" style="left:21px;top:24px">16</div></div>
<div class="t td" style="right:233px;top:814px">14.0</div><div class="t td" style="right:157px;top:814px">14.2</div><div class="t td red" style="right:86px;top:814px">+0.2</div><div class="t td" style="right:24px;top:814px">5</div>

<!-- FLEET CONTENT -->
<div class="t fl" style="top:881px">Cart 1</div><div class="tr" style="top:881px"><div style="width:233px;background:#2c5697"></div></div><div class="t fv" style="top:881px">91</div>
<div class="t fl" style="top:909px">Cart 2</div><div class="tr" style="top:909px"><div style="width:51px;background:#e73c2f"></div></div><div class="t fv" style="top:909px">20</div>
<div class="t fl" style="top:937px">Cart 3</div><div class="tr" style="top:937px"><div style="width:13px;background:#ff9216"></div></div><div class="t fv" style="top:937px">5</div>
<div class="t fl" style="top:965px">Accessible Cart</div><div class="tr" style="top:965px"><div style="width:5px;background:#948a12"></div></div><div class="t fv" style="top:965px">2</div>
<div class="t fl" style="top:993px">Cart 4</div><div class="tr" style="top:993px"></div><div class="t fv" style="top:993px">0</div>
<div class="rule" style="left:1512px;top:1025px;width:397px"></div>
<div class="t ff" style="left:1512px">Total Fleet:</div><div class="t ffb" style="left:1582px;color:#1f2937">5</div>
<div class="t ff" style="left:1614px">Available:</div><div class="t ffb" style="left:1674px;color:#2fb34f">4</div>
<div class="t ff" style="left:1706.5px">Overdue Maintenance:</div><div class="t ffb" style="left:1845px;color:#ef4444">1</div>

<!-- RIGHT EDGE FADE -->
<div class="b" style="left:1906px;top:0;width:14px;height:1080px;background:linear-gradient(90deg,rgba(0,0,0,0),rgba(0,0,0,.035))"></div>
</body>
</html>
